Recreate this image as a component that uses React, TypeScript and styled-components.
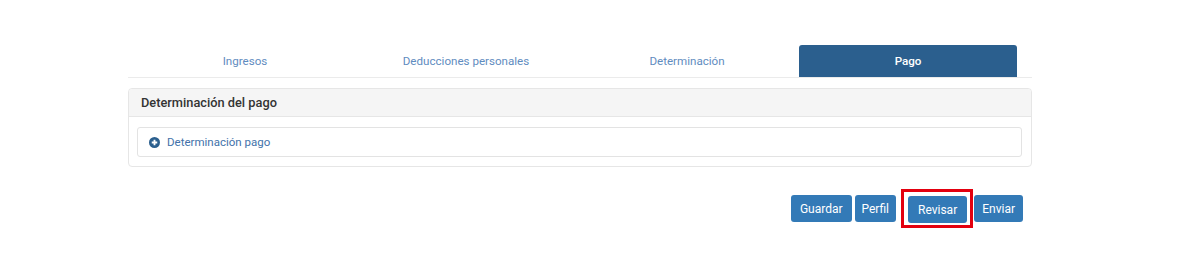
import styled, { createGlobalStyle } from 'styled-components';

const GlobalStyle = createGlobalStyle`
  body {
    margin: 0;
    background: #ffffff;
    font-family: Roboto, "Liberation Sans", sans-serif;
  }
`;

const Page = styled.div`
  width: 904px;
  margin-left: 128px;
  padding-top: 45px;
`;

const TabBar = styled.div`
  display: flex;
  gap: 3px;
  padding-left: 8px;
  border-bottom: 1px solid #ebebeb;
`;

const Tab = styled.div<{ $active?: boolean }>`
  width: 218px;
  height: 32px;
  display: flex;
  align-items: center;
  justify-content: center;
  font-size: 11.6px;
  font-weight: ${(p) => (p.$active ? 500 : 400)};
  color: ${(p) => (p.$active ? '#ffffff' : '#5f8cc0')};
  background: ${(p) => (p.$active ? '#2b5f8e' : 'transparent')};
  border-radius: 3px 3px 0 0;
  cursor: pointer;
`;

const Panel = styled.div`
  margin-top: 10px;
  border: 1px solid #e6e6e6;
  border-radius: 4px;
  background: #ffffff;
`;

const PanelHeader = styled.div`
  height: 27px;
  display: flex;
  align-items: center;
  padding: 0 12px;
  background: #f5f5f5;
  border-bottom: 1px solid #e6e6e6;
  border-radius: 4px 4px 0 0;
  font-size: 12.8px;
  font-weight: 500;
  color: #333333;
`;

const PanelBody = styled.div`
  padding: 10px 9px 9px 8px;
`;

const Accordion = styled.div`
  height: 28px;
  display: flex;
  align-items: center;
  gap: 7px;
  padding: 0 11px;
  border: 1px solid #e3e3e3;
  border-radius: 3px;
  font-size: 11.5px;
  color: #4272aa;
  cursor: pointer;
`;

const Actions = styled.div`
  display: flex;
  justify-content: flex-end;
  align-items: center;
  gap: 3px;
  margin-top: 22px;
  margin-right: 9px;
`;

const Button = styled.button<{ $px?: number }>`
  height: 27px;
  padding: 0 ${(p) => p.$px ?? 9}px;
  border: none;
  border-radius: 3px;
  background: #337ab7;
  color: #ffffff;
  font-family: Roboto, "Liberation Sans", sans-serif;
  font-size: 12px;
  cursor: pointer;
`;

const Highlight = styled.div`
  display: flex;
  margin: 0 -2px 0 2px;
  padding: 4px 3px 2px 4px;
  border: 3px solid #e3000f;
`;

const PlusIcon = () => (
  <svg width="11" height="11" viewBox="0 0 12 12">
    <circle cx="6" cy="6" r="6" fill="#2b5f8e" />
    <path d="M6 3v6M3 6h6" stroke="#ffffff" strokeWidth="2" />
  </svg>
);

const tabs = ['Ingresos', 'Deducciones personales', 'Determinación', 'Pago'];

const App = () => (
  <>
    <GlobalStyle />
    <Page>
      <TabBar>
        {tabs.map((t) => (
          <Tab key={t} $active={t === 'Pago'}>
            {t}
          </Tab>
        ))}
      </TabBar>
      <Panel>
        <PanelHeader>Determinación del pago</PanelHeader>
        <PanelBody>
          <Accordion>
            <PlusIcon />
            Determinación pago
          </Accordion>
        </PanelBody>
      </Panel>
      <Actions>
        <Button>Guardar</Button>
        <Button $px={7}>Perfil</Button>
        <Highlight>
          <Button $px={10}>Revisar</Button>
        </Highlight>
        <Button $px={8}>Enviar</Button>
      </Actions>
    </Page>
  </>
);

export default App;
